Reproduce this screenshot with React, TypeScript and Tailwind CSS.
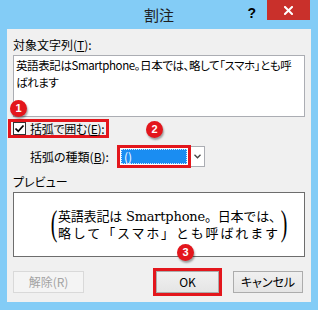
const ui = "font-['Noto_Sans_CJK_JP',sans-serif] [font-feature-settings:'palt']"

function Badge({ n, className }: { n: string; className: string }) {
  return (
    <div
      className={`absolute w-[17px] h-[17px] rounded-full bg-[#e3161c] text-white text-[11px] leading-none font-bold font-['Liberation_Sans',sans-serif] flex items-center justify-center shadow-[1px_2px_2px_rgba(0,0,0,0.35)] ${className}`}
    >
      {n}
    </div>
  )
}

function Button({ children, disabled, className = '' }: { children: React.ReactNode; disabled?: boolean; className?: string }) {
  return (
    <button
      type="button"
      disabled={disabled}
      className={`h-[22px] text-[12px] leading-none border ${
        disabled
          ? 'border-[#d9d9d9] bg-[#f4f4f4] text-[#a3a3a3]'
          : 'border-[#acacac] bg-gradient-to-b from-[#f0f0f0] to-[#e5e5e5] text-black'
      } ${className}`}
    >
      {children}
    </button>
  )
}

export default function App() {
  return (
    <div className={`relative w-[318px] h-[310px] bg-[#83ccf6] flex flex-col overflow-hidden ${ui}`}>
      {/* title bar */}
      <div className="h-[29px] grid grid-cols-[1fr_auto_1fr]">
        <div />
        <div className="pt-[6px] text-[15px] leading-[18px] text-[#1e1e1e]">割注</div>
        <div className="flex justify-end items-start">
          <span className="mt-[5px] mr-[11px] text-[14px] font-bold leading-[16px] text-black font-['Liberation_Sans',sans-serif]">?</span>
          <div className="mr-[8px] w-[43px] h-[20px] bg-[#c9302b] flex items-center justify-center">
            <svg width="9" height="9" viewBox="0 0 9 9">
              <path d="M1 1L8 8M8 1L1 8" stroke="#fff" strokeWidth="2" strokeLinecap="square" />
            </svg>
          </div>
        </div>
      </div>

      {/* client area */}
      <div className="mx-[7px] h-[273px] bg-[#f0f0f0] px-[6px] flex flex-col text-[12px] text-black">
        <div className="mt-[8px] leading-[15px]">
          対象文字列(<span className="underline">T</span>):
        </div>
        <div className="mt-[3px] h-[62px] border border-[#abadb3] bg-white px-[2px] pt-[1px] text-[11.5px] tracking-[-0.4px] leading-[17px] whitespace-nowrap overflow-hidden">
          <div>英語表記はSmartphone。日本では、略して「スマホ」とも呼</div>
          <div>ばれます</div>
        </div>

        {/* checkbox row */}
        <div className="mt-[2px] ml-[-5px] w-[101px] h-[19px] border-[3px] border-[#e3161c] flex items-center pl-[2px] gap-[4px]">
          <div className="w-[13px] h-[13px] border border-[#333] bg-white flex items-center justify-center">
            <svg width="11" height="11" viewBox="0 0 11 11">
              <path d="M1.5 5.5L4.2 8.3L9.5 2.5" stroke="#000" strokeWidth="1.8" fill="none" />
            </svg>
          </div>
          <span className="leading-[13px] whitespace-nowrap tracking-[-0.3px]">
            括弧で囲む(<span className="underline">E</span>):
          </span>
        </div>

        {/* bracket type row */}
        <div className="mt-[7px] h-[23px] flex items-center">
          <div className="w-[104px] pl-[17px] leading-[15px] whitespace-nowrap">
            括弧の種類(<span className="underline">B</span>):
          </div>
          <div className="w-[74px] h-[23px] border-[3px] border-[#e3161c] bg-white p-[1px]">
            <div className="h-full bg-[#1a8df2] border border-dotted border-[#cfe6ff] text-white leading-[13px] pl-[2px]">()</div>
          </div>
          <div className="w-[14px] h-[21px] border border-l-0 border-[#abadb3] bg-white flex items-center justify-center">
            <svg width="7" height="5" viewBox="0 0 7 5">
              <path d="M0.5 0.8L3.5 3.8L6.5 0.8" stroke="#444" strokeWidth="1.3" fill="none" />
            </svg>
          </div>
        </div>

        <div className="mt-[6px] leading-[15px]">プレビュー</div>
        <div className="mt-[3px] h-[65px] border border-[#6d6d6d] bg-white flex items-center pl-[36px]">
          <span className="w-[8px] flex justify-center font-['Liberation_Serif',serif] text-[36px] leading-none scale-x-[0.55] -mt-[4px]">(</span>
          <div className="w-[220px] text-[13px] leading-[17px] font-['DejaVu_Serif','Noto_Sans_CJK_JP',serif] [font-feature-settings:normal]">
            <div className="text-justify [text-align-last:justify] whitespace-nowrap tracking-[-0.2px]">英語表記は Smartphone。日本では、</div>
            <div className="text-justify [text-align-last:justify]">略して「スマホ」とも呼ばれます</div>
          </div>
          <span className="ml-[2px] w-[8px] flex justify-center font-['Liberation_Serif',serif] text-[36px] leading-none scale-x-[0.55] -mt-[4px]">)</span>
        </div>

        {/* buttons */}
        <div className="mt-[12px] h-[25px] flex items-center pr-[2px]">
          <Button disabled className="w-[71px]">解除(R)</Button>
          <div className="flex-1" />
          <div className="border-[3px] border-[#e3161c]">
            <Button className="w-[63px] h-[19px] block">OK</Button>
          </div>
          <Button className="ml-[11px] w-[70px]">キャンセル</Button>
        </div>
      </div>

      <Badge n="1" className="left-[10px] top-[100px]" />
      <Badge n="2" className="left-[146px] top-[121px]" />
      <Badge n="3" className="left-[177px] top-[244px]" />
    </div>
  )
}
